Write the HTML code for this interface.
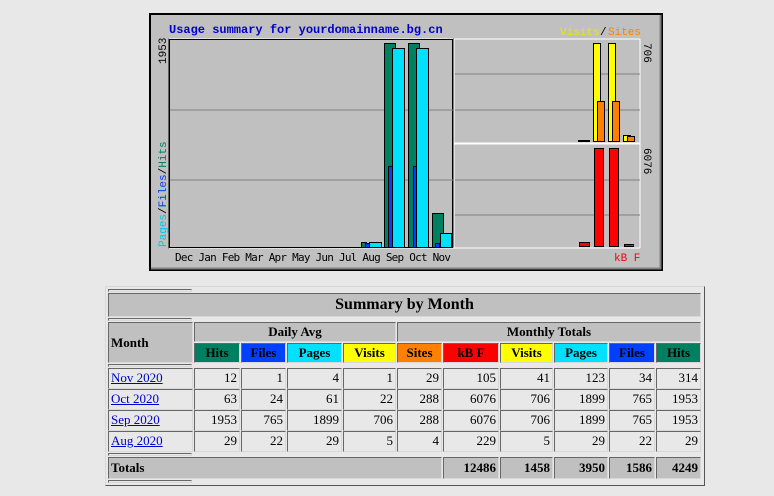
<!DOCTYPE html>
<html><head><meta charset="utf-8"><style>
*{margin:0;padding:0;box-sizing:border-box}
body{width:774px;height:496px;background:#e8e8e8;position:relative;overflow:hidden;font-family:"Liberation Serif",serif;font-size:12px;color:#000}
.c{position:absolute;border:1px solid;border-color:#666 #d8d8d8 #d8d8d8 #666;background:#e8e8e8;line-height:18px;text-align:right;padding-right:2px;font-size:13px}
.g{background:#c0c0c0}
.h{font-weight:bold;text-align:center;padding:0}
.sep{position:absolute;left:108px;width:84px;height:3px;border:1px solid;border-color:#666 #d8d8d8 #d8d8d8 #666}
a{color:#00c;text-decoration:underline}
</style></head><body>
<svg width="774" height="280" style="position:absolute;left:0;top:0" font-family="Liberation Mono, monospace">
<rect x="150" y="14" width="512" height="256" fill="#c0c0c0" stroke="#000" stroke-width="2"/>
<line x1="151" y1="268.5" x2="661" y2="268.5" stroke="#808080" stroke-width="2"/>
<line x1="660.5" y1="15" x2="660.5" y2="269" stroke="#808080" stroke-width="2"/>
<text x="169" y="33" font-size="12" font-weight="bold" fill="#0000cc">Usage summary for yourdomainname.bg.cn</text>
<text x="560" y="35" font-size="11" fill="#e8e800">Visits</text><text x="600" y="35" font-size="11" fill="#000">/</text><text x="608" y="35" font-size="11" fill="#ff8000">Sites</text>
<rect x="169" y="39" width="284" height="209" fill="none" stroke="#000"/>
<path d="M169 39H453M454 39H640M454 143H640M454 144H640M169 248H640M640 39V248M454 39V248" stroke="#fff" fill="none"/>
<rect x="169.5" y="39.5" width="283" height="208" fill="none" stroke="#000"/>
<path d="M170 110H453M170 180H453M455 74H640M455 110H640M455 180H640M455 215H640" stroke="#808080"/>
<g stroke="#000" stroke-width="1">
<rect x="361.5" y="242.5" width="5" height="5" fill="#008060"/>
<rect x="365.5" y="243.5" width="4" height="4" fill="#0040ff"/>
<rect x="369.5" y="242.5" width="12" height="5" fill="#00e0ff"/>
<rect x="384.5" y="43.5" width="11" height="204" fill="#008060"/>
<rect x="388.5" y="166.5" width="4" height="81" fill="#0040ff"/>
<rect x="392.5" y="48.5" width="12" height="199" fill="#00e0ff"/>
<rect x="408.5" y="43.5" width="11" height="204" fill="#008060"/>
<rect x="413.5" y="166.5" width="4" height="81" fill="#0040ff"/>
<rect x="416.5" y="48.5" width="12" height="199" fill="#00e0ff"/>
<rect x="432.5" y="213.5" width="11" height="34" fill="#008060"/>
<rect x="435.5" y="243.5" width="4" height="4" fill="#0040ff"/>
<rect x="440.5" y="233.5" width="11" height="14" fill="#00e0ff"/>
<rect x="578.5" y="140.5" width="11" height="1" fill="#000"/>
<rect x="593.5" y="43.5" width="7" height="98" fill="#ffff00"/>
<rect x="597.5" y="101.5" width="7" height="40" fill="#ff8000"/>
<rect x="608.5" y="43.5" width="7" height="98" fill="#ffff00"/>
<rect x="612.5" y="101.5" width="7" height="40" fill="#ff8000"/>
<rect x="623.5" y="135.5" width="7" height="6" fill="#ffff00"/>
<rect x="627.5" y="136.5" width="7" height="5" fill="#ff8000"/>
<rect x="579.5" y="242.5" width="10" height="4" fill="#ff0000"/>
<rect x="594.5" y="148.5" width="9" height="98" fill="#ff0000"/>
<rect x="609.5" y="148.5" width="9" height="98" fill="#ff0000"/>
<rect x="624.5" y="244.5" width="9" height="2" fill="#ff0000"/>
</g>
<text transform="translate(166,64) rotate(-90)" font-size="11" fill="#000">1953</text>
<text transform="translate(166,247) rotate(-90)" font-size="11"><tspan fill="#00c8e0">Pages</tspan><tspan fill="#000">/</tspan><tspan fill="#0040ff">Files</tspan><tspan fill="#000">/</tspan><tspan fill="#008060">Hits</tspan></text>
<text transform="translate(644,43) rotate(90)" font-size="11" fill="#000">706</text>
<text transform="translate(644,148) rotate(90)" font-size="11" fill="#000">6076</text>
<text x="175" y="261" font-size="11" fill="#000" font-family="DejaVu Sans Mono, monospace" textLength="276">Dec Jan Feb Mar Apr May Jun Jul Aug Sep Oct Nov</text>
<text x="614" y="261" font-size="11" fill="#ff0000">kB F</text>
</svg>

<div style="position:absolute;left:105px;top:286px;width:600px;height:200px;border:1px solid;border-color:#d8d8d8 #555 #555 #d8d8d8"></div>
<div class="sep" style="top:289px"></div>
<div class="c g h" style="left:108px;top:293px;width:593px;height:24px;font-size:16px;line-height:22px">Summary by Month</div>
<div class="sep" style="top:318px"></div>
<div class="c g h" style="left:108px;top:322px;width:85px;height:41px;line-height:39px;text-align:left;padding-left:2px">Month</div>
<div class="c g h" style="left:194px;top:322px;width:202px;height:20px">Daily Avg</div>
<div class="c g h" style="left:397px;top:322px;width:304px;height:20px">Monthly Totals</div>

<div class="c h" style="left:194px;top:343px;width:46px;height:20px;background:#008060">Hits</div>
<div class="c h" style="left:241px;top:343px;width:45px;height:20px;background:#0040ff">Files</div>
<div class="c h" style="left:287px;top:343px;width:55px;height:20px;background:#00e0ff">Pages</div>
<div class="c h" style="left:343px;top:343px;width:53px;height:20px;background:#ffff00">Visits</div>
<div class="c h" style="left:397px;top:343px;width:45px;height:20px;background:#ff8000">Sites</div>
<div class="c h" style="left:443px;top:343px;width:56px;height:20px;background:#ff0000">kB F</div>
<div class="c h" style="left:500px;top:343px;width:53px;height:20px;background:#ffff00">Visits</div>
<div class="c h" style="left:554px;top:343px;width:54px;height:20px;background:#00e0ff">Pages</div>
<div class="c h" style="left:609px;top:343px;width:46px;height:20px;background:#0040ff">Files</div>
<div class="c h" style="left:656px;top:343px;width:45px;height:20px;background:#008060">Hits</div>
<div class="sep" style="top:364px"></div>

<div id="rows"></div>
<!-- row 1 -->
<div class="c" style="left:108px;top:368px;width:85px;height:21px;text-align:left;padding-left:2px"><a>Nov 2020</a></div>
<div class="c" style="left:194px;top:368px;width:46px;height:21px">12</div>
<div class="c" style="left:241px;top:368px;width:45px;height:21px">1</div>
<div class="c" style="left:287px;top:368px;width:55px;height:21px">4</div>
<div class="c" style="left:343px;top:368px;width:53px;height:21px">1</div>
<div class="c" style="left:397px;top:368px;width:45px;height:21px">29</div>
<div class="c" style="left:443px;top:368px;width:56px;height:21px">105</div>
<div class="c" style="left:500px;top:368px;width:53px;height:21px">41</div>
<div class="c" style="left:554px;top:368px;width:54px;height:21px">123</div>
<div class="c" style="left:609px;top:368px;width:46px;height:21px">34</div>
<div class="c" style="left:656px;top:368px;width:45px;height:21px">314</div>
<!-- row 2 -->
<div class="c" style="left:108px;top:389px;width:85px;height:21px;text-align:left;padding-left:2px"><a>Oct 2020</a></div>
<div class="c" style="left:194px;top:389px;width:46px;height:21px">63</div>
<div class="c" style="left:241px;top:389px;width:45px;height:21px">24</div>
<div class="c" style="left:287px;top:389px;width:55px;height:21px">61</div>
<div class="c" style="left:343px;top:389px;width:53px;height:21px">22</div>
<div class="c" style="left:397px;top:389px;width:45px;height:21px">288</div>
<div class="c" style="left:443px;top:389px;width:56px;height:21px">6076</div>
<div class="c" style="left:500px;top:389px;width:53px;height:21px">706</div>
<div class="c" style="left:554px;top:389px;width:54px;height:21px">1899</div>
<div class="c" style="left:609px;top:389px;width:46px;height:21px">765</div>
<div class="c" style="left:656px;top:389px;width:45px;height:21px">1953</div>
<!-- row 3 -->
<div class="c" style="left:108px;top:410px;width:85px;height:21px;text-align:left;padding-left:2px"><a>Sep 2020</a></div>
<div class="c" style="left:194px;top:410px;width:46px;height:21px">1953</div>
<div class="c" style="left:241px;top:410px;width:45px;height:21px">765</div>
<div class="c" style="left:287px;top:410px;width:55px;height:21px">1899</div>
<div class="c" style="left:343px;top:410px;width:53px;height:21px">706</div>
<div class="c" style="left:397px;top:410px;width:45px;height:21px">288</div>
<div class="c" style="left:443px;top:410px;width:56px;height:21px">6076</div>
<div class="c" style="left:500px;top:410px;width:53px;height:21px">706</div>
<div class="c" style="left:554px;top:410px;width:54px;height:21px">1899</div>
<div class="c" style="left:609px;top:410px;width:46px;height:21px">765</div>
<div class="c" style="left:656px;top:410px;width:45px;height:21px">1953</div>
<!-- row 4 -->
<div class="c" style="left:108px;top:431px;width:85px;height:21px;text-align:left;padding-left:2px"><a>Aug 2020</a></div>
<div class="c" style="left:194px;top:431px;width:46px;height:21px">29</div>
<div class="c" style="left:241px;top:431px;width:45px;height:21px">22</div>
<div class="c" style="left:287px;top:431px;width:55px;height:21px">29</div>
<div class="c" style="left:343px;top:431px;width:53px;height:21px">5</div>
<div class="c" style="left:397px;top:431px;width:45px;height:21px">4</div>
<div class="c" style="left:443px;top:431px;width:56px;height:21px">229</div>
<div class="c" style="left:500px;top:431px;width:53px;height:21px">5</div>
<div class="c" style="left:554px;top:431px;width:54px;height:21px">29</div>
<div class="c" style="left:609px;top:431px;width:46px;height:21px">22</div>
<div class="c" style="left:656px;top:431px;width:45px;height:21px">29</div>
<div class="sep" style="top:453px"></div>
<!-- totals -->
<div class="c g" style="left:108px;top:457px;width:334px;height:22px;text-align:left;padding-left:2px;font-weight:bold;line-height:20px">Totals</div>
<div class="c g" style="left:443px;top:457px;width:56px;height:22px;font-weight:bold;line-height:20px">12486</div>
<div class="c g" style="left:500px;top:457px;width:53px;height:22px;font-weight:bold;line-height:20px">1458</div>
<div class="c g" style="left:554px;top:457px;width:54px;height:22px;font-weight:bold;line-height:20px">3950</div>
<div class="c g" style="left:609px;top:457px;width:46px;height:22px;font-weight:bold;line-height:20px">1586</div>
<div class="c g" style="left:656px;top:457px;width:45px;height:22px;font-weight:bold;line-height:20px">4249</div>
<div class="sep" style="top:480px"></div>
</body></html>
